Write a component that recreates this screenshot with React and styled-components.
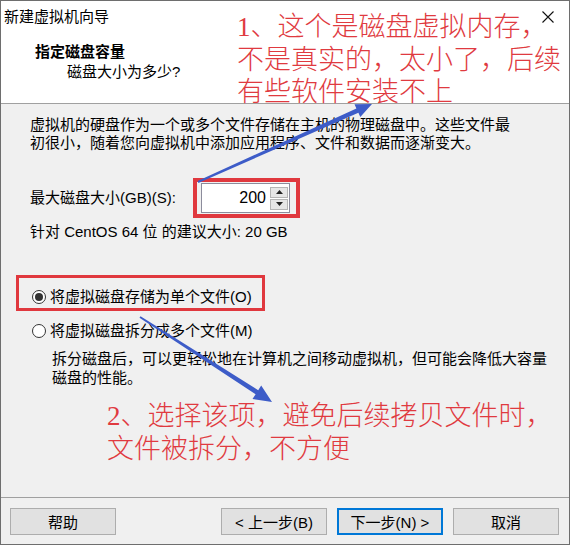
import React from "react";
import styled, { createGlobalStyle } from "styled-components";

const Global = createGlobalStyle`
  html, body { margin: 0; padding: 0; background: #ffffff; }
  * { box-sizing: border-box; }
`;

const Window = styled.div`
  position: relative;
  width: 570px;
  height: 545px;
  border: 1px solid #6e6e6e;
  display: flex;
  flex-direction: column;
  background: #f0f0f0;
  font-family: "Liberation Sans", "Noto Sans CJK SC", sans-serif;
  font-size: 15px;
  color: #000;
  overflow: hidden;
`;

const Header = styled.header`
  height: 103px;
  background: #ffffff;
  border-bottom: 1px solid #a0a0a0;
  display: flex;
  flex-direction: column;
`;

const TitleRow = styled.div`
  display: flex;
  justify-content: space-between;
  align-items: center;
  padding: 7px 15px 0 3px;
  line-height: 18px;
`;

const Title = styled.span``;

const CloseIcon = styled.svg`
  width: 12px;
  height: 12px;
`;

const Heading = styled.div`
  margin-top: 17px;
  padding-left: 34px;
  line-height: 18px;
  font-weight: 700;
`;

const SubHeading = styled.div`
  margin-top: 2px;
  padding-left: 66px;
  line-height: 18px;
`;

const Body = styled.main`
  flex: 1;
  padding: 12px 0 0 29px;
  display: flex;
  flex-direction: column;
`;

const Para = styled.p`
  margin: ${(p) => p.$top || 0}px 0 0 ${(p) => p.$indent || 0}px;
  line-height: ${(p) => p.$lh || 18}px;
`;

const SizeRow = styled.div`
  margin-top: 31px;
  height: 30px;
  display: flex;
  align-items: center;
`;

const SizeLabel = styled.label`
  width: 171px;
  line-height: 18px;
`;

const SpinBox = styled.div`
  width: 89px;
  height: 30px;
  border: 1px solid #8c8c9c;
  background: #ffffff;
  display: flex;
  align-items: center;
`;

const SpinValue = styled.span`
  flex: 1;
  text-align: right;
  padding-right: 4px;
  font-size: 16px;
`;

const SpinButtons = styled.div`
  width: 18px;
  margin-right: 1px;
  display: flex;
  flex-direction: column;
  gap: 1px;
`;

const SpinButton = styled.div`
  height: 11px;
  background: #e6e6e6;
  border: 1px solid #b5b5b5;
  display: flex;
  align-items: center;
  justify-content: center;
`;

const RadioRow = styled.div`
  margin-top: ${(p) => p.$top}px;
  padding-left: 2px;
  display: flex;
  align-items: center;
  gap: 4px;
  line-height: 18px;
`;

const Radio = styled.span`
  width: 14px;
  height: 14px;
  border-radius: 50%;
  border: 1px solid #333333;
  background: #ffffff;
  display: flex;
  align-items: center;
  justify-content: center;
  &::after {
    content: "";
    display: ${(p) => (p.$checked ? "block" : "none")};
    width: 8px;
    height: 8px;
    border-radius: 50%;
    background: #333333;
  }
`;

const Footer = styled.footer`
  height: 47px;
  border-top: 1px solid #a0a0a0;
  padding: 10px 10px 0 9px;
  display: flex;
  align-items: flex-start;
  justify-content: space-between;
`;

const ButtonGroup = styled.div`
  display: flex;
  gap: 10px;
`;

const Button = styled.button`
  width: 106px;
  height: 27px;
  padding: 0;
  font: inherit;
  color: #000;
  background: #e1e1e1;
  border: ${(p) => (p.$primary ? "2px solid #0078d7" : "1px solid #adadad")};
`;

const Annotation = styled.div`
  position: absolute;
  left: ${(p) => p.$x}px;
  top: ${(p) => p.$y}px;
  font-family: "Liberation Serif", "Noto Sans CJK SC", serif;
  font-size: 27px;
  font-weight: 300;
  line-height: ${(p) => p.$lh}px;
  color: #e03a40;
  white-space: nowrap;
  pointer-events: none;
`;

const Highlight = styled.div`
  position: absolute;
  left: ${(p) => p.$x}px;
  top: ${(p) => p.$y}px;
  width: ${(p) => p.$w}px;
  height: ${(p) => p.$h}px;
  border: ${(p) => p.$b}px solid #e0383e;
  pointer-events: none;
`;

const ArrowLayer = styled.svg`
  position: absolute;
  left: -1px;
  top: -1px;
  width: 570px;
  height: 546px;
  pointer-events: none;
`;

function Arrow({ x1, y1, x2, y2, head = 16, half = 7, color = "#3d5cc8" }) {
  const dx = x2 - x1;
  const dy = y2 - y1;
  const len = Math.hypot(dx, dy);
  const ux = dx / len;
  const uy = dy / len;
  const nx = -uy;
  const ny = ux;
  const bx = x2 - head * ux;
  const by = y2 - head * uy;
  const s0 = 1;
  const s1 = 2.4;
  const pts = [
    [x1 + nx * s0, y1 + ny * s0],
    [bx + nx * s1, by + ny * s1],
    [bx + nx * half, by + ny * half],
    [x2, y2],
    [bx - nx * half, by - ny * half],
    [bx - nx * s1, by - ny * s1],
    [x1 - nx * s0, y1 - ny * s0],
  ]
    .map((p) => p.map((v) => v.toFixed(1)).join(","))
    .join(" ");
  return <polygon points={pts} fill={color} />;
}

export default function App() {
  return (
    <>
      <Global />
      <Window>
        <Header>
          <TitleRow>
            <Title>新建虚拟机向导</Title>
            <CloseIcon viewBox="0 0 12 12">
              <path d="M0.5 0.5 L11.5 11.5 M11.5 0.5 L0.5 11.5" stroke="#111" strokeWidth="1.1" fill="none" />
            </CloseIcon>
          </TitleRow>
          <Heading>指定磁盘容量</Heading>
          <SubHeading>磁盘大小为多少?</SubHeading>
        </Header>

        <Body>
          <Para>虚拟机的硬盘作为一个或多个文件存储在主机的物理磁盘中。这些文件最</Para>
          <Para>初很小，随着您向虚拟机中添加应用程序、文件和数据而逐渐变大。</Para>

          <SizeRow>
            <SizeLabel>最大磁盘大小(GB)(S):</SizeLabel>
            <SpinBox>
              <SpinValue>200</SpinValue>
              <SpinButtons>
                <SpinButton>
                  <svg width="7" height="4" viewBox="0 0 7 4">
                    <polygon points="0,4 7,4 3.5,0" fill="#222" />
                  </svg>
                </SpinButton>
                <SpinButton>
                  <svg width="7" height="4" viewBox="0 0 7 4">
                    <polygon points="0,0 7,0 3.5,4" fill="#222" />
                  </svg>
                </SpinButton>
              </SpinButtons>
            </SpinBox>
          </SizeRow>

          <Para $top={10}>针对 CentOS 64 位 的建议大小: 20 GB</Para>

          <RadioRow $top={47}>
            <Radio $checked />
            <span>将虚拟磁盘存储为单个文件(O)</span>
          </RadioRow>
          <RadioRow $top={16}>
            <Radio />
            <span>将虚拟磁盘拆分成多个文件(M)</span>
          </RadioRow>
          <Para $top={9} $indent={22} $lh={19}>
            拆分磁盘后，可以更轻松地在计算机之间移动虚拟机，但可能会降低大容量
          </Para>
          <Para $indent={22} $lh={19}>磁盘的性能。</Para>
        </Body>

        <Footer>
          <Button>帮助</Button>
          <ButtonGroup>
            <Button>&lt; 上一步(B)</Button>
            <Button $primary>下一步(N) &gt;</Button>
            <Button>取消</Button>
          </ButtonGroup>
        </Footer>

        <Highlight $x={192} $y={177} $w={107} $h={40} $b={4} />
        <Highlight $x={15} $y={274} $w={249} $h={36} $b={3} />

        <Annotation $x={236} $y={10} $lh={32.5}>
          1、这个是磁盘虚拟内存，
          <br />
          不是真实的，太小了，后续
          <br />
          有些软件安装不上
        </Annotation>
        <Annotation $x={106} $y={399} $lh={33}>
          2、选择该项，避免后续拷贝文件时，
          <br />
          文件被拆分，不方便
        </Annotation>

        <ArrowLayer viewBox="0 0 570 546">
          <Arrow x1={198} y1={182} x2={372} y2={104} head={16} half={7} />
          <Arrow x1={140} y1={317} x2={272} y2={402} head={18} half={8} />
        </ArrowLayer>
      </Window>
    </>
  );
}
